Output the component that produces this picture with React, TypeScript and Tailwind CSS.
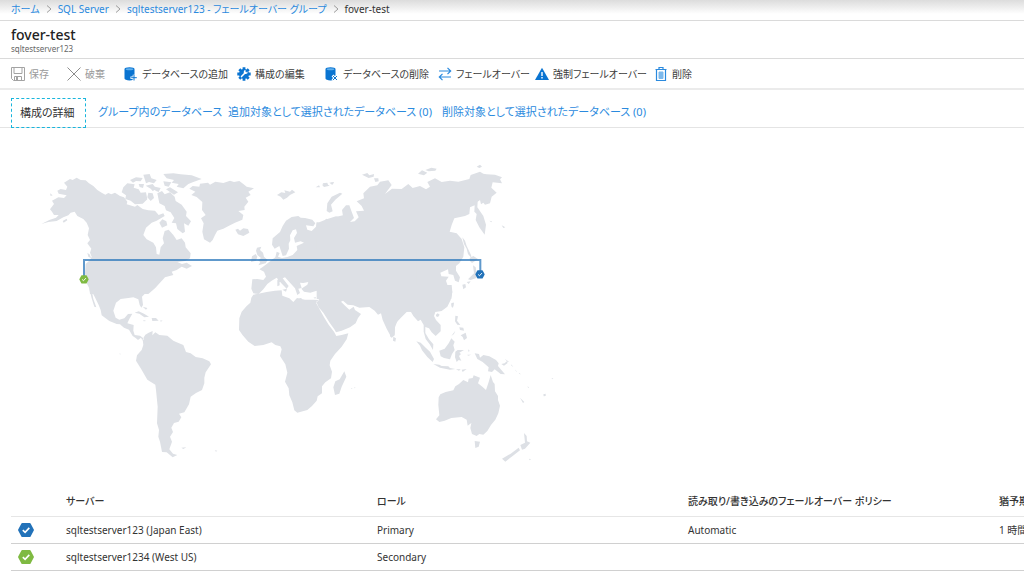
import type { ReactNode } from 'react';
import clsx from 'clsx';

// ── Icons ────────────────────────────────────────────────────

function SaveIcon() {
  return (
    <svg viewBox="0 0 14 14" className="size-3.5 shrink-0" fill="none" stroke="#a3a3a3">
      <path d="M.5.5h13v13h-11l-2-2z" />
      <path d="M3 .5v6h8v-6M3.500 13.500v-4h7v4" />
      <path d="M5 10h2v3H5z" fill="#a3a3a3" stroke="none" />
    </svg>
  );
}

function DiscardIcon() {
  return (
    <svg viewBox="0 0 14 14" className="size-3.5 shrink-0" fill="none" stroke="#8c8c8c">
      <path d="M.5.5l13 13M13.500.5l-13 13" />
    </svg>
  );
}

function DatabaseIcon({ children }: { children: ReactNode }) {
  return (
    <svg viewBox="0 0 14 14" className="size-3.5 shrink-0">
      <path d="M.5 2C.5 1 2.500.3 5.500.3S10.500 1 10.500 2v9.500c0 1-2 1.900-5 1.900s-5-.9-5-1.900z" fill="#0a74d1" />
      <ellipse cx="5.500" cy="2.200" rx="3.800" ry="1" fill="#5fb0ee" />
      {children}
    </svg>
  );
}

function AddDatabaseIcon() {
  return (
    <DatabaseIcon>
      <path d="M10 7.700v6.300M6.500 10.700h7" stroke="#fff" strokeWidth="2.600" />
      <path d="M10 8v5.500M7.200 10.700h5.600" stroke="#0a74d1" />
    </DatabaseIcon>
  );
}

function RemoveDatabaseIcon() {
  return (
    <DatabaseIcon>
      <path d="M7.500 8.500l5 5M12.500 8.500l-5 5" stroke="#fff" strokeWidth="2.600" />
      <path d="M8 9l4 4M12 9l-4 4" stroke="#0a74d1" />
    </DatabaseIcon>
  );
}

function ConfigIcon() {
  return (
    <svg viewBox="0 0 14 14" className="size-3.5 shrink-0">
      <g stroke="#0a74d1" strokeWidth="2.800">
        <path d="M7 .3v13.400M.3 7h13.400M2.300 2.300l9.400 9.400M11.700 2.300l-9.400 9.400" />
      </g>
      <circle cx="7" cy="7" r="5" fill="#0a74d1" />
      <path d="M4.500 9.600l4.200-4.300" stroke="#fff" strokeWidth="1.500" strokeLinecap="round" />
      <path d="M10.600 4.500a2 2 0 1 1-1.900-1.500L8.200 4.400l1.100 1z" fill="#fff" />
    </svg>
  );
}

function FailoverIcon() {
  return (
    <svg viewBox="0 0 14 14" className="size-3.5 shrink-0" fill="none" stroke="#2b8ade" strokeWidth="1.200">
      <path d="M1 4h11.500M9.500.8L12.700 4 9.500 7.200M13 10H1.500M4.500 6.800L1.300 10l3.200 3.200" />
    </svg>
  );
}

function WarningIcon() {
  return (
    <svg viewBox="0 0 14 14" className="size-3.5 shrink-0">
      <path d="M7 .8L14 13H0z" fill="#0a74d1" />
      <path d="M7 5v4M7 10v1.500" stroke="#fff" strokeWidth="1.400" />
    </svg>
  );
}

function DeleteIcon() {
  return (
    <svg viewBox="0 0 14 14" className="size-3.5 shrink-0" fill="none" stroke="#2b8ade">
      <path d="M1.500 2.500h11M5 2.500v-2h4v2M2.500 2.500v11h9v-11" strokeWidth="1.200" />
      <path d="M5 5h4v6.500H5z" fill="#7db9ec" stroke="#7db9ec" />
    </svg>
  );
}

const HEXAGON = 'M4.300 1h7.400a1 1 0 0 1 .9.5l3.200 6a1 1 0 0 1 0 1l-3.200 6a1 1 0 0 1-.9.5H4.300a1 1 0 0 1-.9-.5L.2 8.500a1 1 0 0 1 0-1l3.200-6a1 1 0 0 1 .9-.5z';

function StatusMark({ color }: { color: string }) {
  return (
    <>
      <path d={HEXAGON} fill={color} />
      <path d="M4.800 8.200l2.300 2.200 4.200-4.500" fill="none" stroke="#fff" strokeWidth="1.600" />
    </>
  );
}

// ── Data ─────────────────────────────────────────────────────

const BLUE = '#2272b9';
const GREEN = '#7fba42';

const crumbs = ['ホーム', 'SQL Server', 'sqltestserver123 - フェールオーバー グループ'];

const commands = [
  { label: '保存', icon: <SaveIcon />, disabled: true },
  { label: '破棄', icon: <DiscardIcon />, disabled: true },
  { label: 'データベースの追加', icon: <AddDatabaseIcon /> },
  { label: '構成の編集', icon: <ConfigIcon /> },
  { label: 'データベースの削除', icon: <RemoveDatabaseIcon /> },
  { label: 'フェールオーバー', icon: <FailoverIcon /> },
  { label: '強制フェールオーバー', icon: <WarningIcon /> },
  { label: '削除', icon: <DeleteIcon /> },
];

const tabs = [
  '構成の詳細',
  'グループ内のデータベース',
  '追加対象として選択されたデータベース (0)',
  '削除対象として選択されたデータベース (0)',
];

const servers = [
  { name: 'sqltestserver123 (Japan East)', role: 'Primary', policy: 'Automatic', grace: '1 時間', color: BLUE },
  { name: 'sqltestserver1234 (West US)', role: 'Secondary', policy: '', grace: '', color: GREEN },
];

// Land outlines, one entry per map tile
const land = [
  {
    // North America
    offset: 'translate(120 480)',
    d: `M30 148L42 132 36 122 55 112 72 114 80 106 56 101 52 92 62 87 78 90 82 80 72 68 90 57 98 60 110 53 122 60 137 61 147 70 160 78 172 90 185 98 196 104 205 99 214 103 225 98 240 108 252 112 262 125 260 133 285 140 292 135 308 147 325 151 345 152 356 165 370 160 374 168 350 182 335 188 318 203 310 225 320 238 340 248 348 262 350 282 358 284 362 262 372 250 368 235 374 213 386 209 400 225 410 240 425 235 435 248 437 262 452 280 450 295 435 303 412 306 426 312 440 308 456 318 440 326 425 320 410 330 395 335 400 345 375 352 360 368 345 385 325 402 150 402 148 385 140 370 135 340 137 312 150 300 155 290 150 278 154 266 142 250 150 240 143 225 147 205 140 188 130 177 112 168 104 155 92 158 85 166 70 172 50 183 25 186 4 192 28 180 48 173 56 165 42 165 36 155Z
        M245 97L250 82 262 70 284 73 281 83 296 88 302 98 318 97 322 118 308 131 285 133 272 122 256 117 258 106Z
        M270 60L288 52 308 54 302 64 288 63 279 68Z M310 44L329 42 334 55 350 60 342 70 327 66 318 70Z
        M317 77L338 72 350 87 338 93 332 86Z M370 64L394 67 386 80 374 77Z M296 72L312 72 309 84 299 81Z
        M325 98L338 100 342 114 332 123 322 112Z M345 80L362 84 356 96 346 92Z
        M370 42L400 40 422 43 455 46 485 57 460 66 445 72 430 85 410 80 416 72 395 68 402 60 380 55Z
        M352 100L366 93 374 103 390 97 404 110 407 123 425 134 440 155 438 168 453 184 445 197 432 190 435 215 428 220 412 207 408 190 395 188 403 174 392 157 378 151 374 138 358 130Z
        M358 188L367 178 379 184 382 196 366 203Z M378 88L390 82 414 97 402 104Z M68 183L80 176 82 181 71 188Z M30 100L38 106 32 108Z
        M142 278L150 284 153 295 145 290Z M308 440L322 444 318 449Z`,
  },
  {
    // Greenland, Iceland, British Isles, Europe
    offset: 'translate(540 480)',
    d: `M28 86L38 78 58 80 60 71 84 68 90 74 106 65 130 69 150 62 162 66 178 63 190 72 200 80 222 85 205 95 212 105 197 113 205 125 193 140 194 150 175 153 190 165 187 179 165 188 150 196 130 206 112 212 105 225 98 240 90 248 72 238 67 215 71 190 63 175 77 165 66 150 67 126 50 111 34 105 46 95Z
        M166 209L174 206 180 212 190 205 204 207 208 218 190 228 174 223Z
        M231 263L244 260 240 270 249 278 252 290 263 300 257 310 235 316 241 306 234 301 243 294 232 285 228 272Z M216 289L227 282 232 290 228 302 213 306Z
        M291 105L304 97 316 99 313 91 330 95 336 89 346 97 330 105 321 113 310 119 302 110Z
        M407 82L417 76 420 82Z M426 74L439 71 449 77 432 81Z M452 68L462 67 458 74Z
        M278 235L300 216 308 198 318 182 335 171 355 168 362 173 375 174 397 179 406 190 400 199 378 196 382 209 395 213 408 200 410 186 430 192 438 176 452 180 470 170 492 165 492 418 414 418 418 391 405 394 391 398 372 395 364 386 382 374 385 366 370 369 360 368 365 384 355 386 360 399 352 405 345 385 330 368 315 352 308 355 326 378 320 386 304 370 290 353 275 362 262 372 250 388 236 402 220 400 214 386 217 358 232 357 250 360 258 350 252 335 238 328 248 321 260 312 275 300 286 292 290 275 299 279 294 290 306 294 322 291 338 285 352 270 350 258 372 248 362 244 345 248 342 234 351 219 348 208 338 211 330 226 331 241 326 251 327 266 318 286 308 288 302 270 298 258 284 266 276 254Z
        M292 360L298 354 299 376 292 379Z M307 389L321 386 318 395Z M354 415L365 414 364 418Z M400 413L408 411 406 416Z`,
  },
  {
    // Siberia, East Asia, Japan
    offset: 'translate(960 480)',
    d: `M-10 190L20 178 48 169 70 175 66 150 78 136 88 136 95 155 102 174 90 186 104 184 116 172 108 154 132 152 125 138 110 124 132 115 130 100 150 80 172 76 180 65 205 61 215 75 195 102 216 86 245 87 265 72 278 84 300 78 318 88 330 80 322 66 345 55 365 66 390 62 415 65 448 57 452 45 480 35 490 41 500 43 525 44 546 52 540 58 546 70 518 67 514 83 530 98 515 110 510 130 495 134 490 128 483 133 480 120 473 125 472 142 490 168 498 194 494 224 478 202 467 180 470 162 463 155 464 136 450 142 448 162 435 168 403 175 395 195 389 215 410 220 425 237 433 262 430 290 418 310 408 318 408 332 420 352 416 367 405 362 400 345 386 342 384 328 361 338 364 349 386 350 378 362 383 377 397 395 394 417 -10 417Z
        M20 153L22 130 35 110 60 98 67 101 46 119 33 134 38 154 28 158Z M8 70L22 68 24 75 12 78Z M28 68L42 66 36 74Z
        M126 44L142 39 148 46 162 42 161 50 146 54Z M162 55L175 55 176 64 166 66Z M294 41L306 31 322 38 312 46Z M316 30L334 23 350 26 346 32 326 34Z M470 20L480 14 486 20 478 24Z
        M427 232L435 242 440 258 453 285 455 295 444 282 440 266 432 252Z M449 294L460 288 474 297 456 309 450 303Z
        M459 316L467 322 471 344 469 354 452 360 444 358 462 340Z M427 374L436 372 438 382 430 388Z M440 366L452 364 446 372Z M394 430L402 428 399 443 395 440Z
        M508 182L516 184 514 187Z M545 196L556 202 550 204Z`,
  },
  {
    // Central America and South America
    offset: 'translate(210 870)',
    d: `M57 -10L60 5 65 25 73 50 79 52 70 27 66 5 74 20 86 45 92 60 95 76 118 93 140 102 150 103 162 113 177 119 188 138 197 144 204 150 213 143 218 152 222 146 210 137 194 135 190 122 191 105 172 100 178 87 187 71 174 72 163 85 148 89 137 83 130 62 138 38 152 27 175 24 190 22 205 28 209 45 214 53 219 45 216 20 226 10 248 -10Z
        M218 148L226 134 236 128 248 123 247 136 256 127 268 135 292 137 310 152 320 157 340 165 348 186 362 190 377 201 398 205 418 214 423 223 407 247 403 263 403 280 396 300 378 309 362 320 357 343 343 367 327 371 334 382 326 395 312 399 304 413 309 426 300 440 306 455 298 478 309 491 322 495 308 502 290 487 276 486 270 455 265 440 267 420 261 400 263 350 258 300 256 284 232 269 213 236 198 212 201 196 215 180 220 165Z
        M194 68L206 64 222 71 237 80 223 82 208 71Z M245 84L258 84 266 92 247 93Z M220 90L229 93 221 94Z M271 91L278 92 272 95Z M334 473L349 472 340 477Z M434 481L442 482 438 485Z M149 190L153 193 149 193Z`,
  },
  {
    // Africa, Arabia, India
    offset: 'translate(690 810)',
    d: `M70 74L85 71 110 66 135 62 155 61 157 77 178 85 190 96 201 84 225 89 250 89 268 90 258 98 270 120 283 143 296 164 312 185 319 198 335 195 355 190 350 208 335 230 315 252 301 272 299 286 306 305 303 325 286 337 276 349 276 370 263 379 260 392 246 408 232 420 202 428 193 421 187 397 178 376 176 355 165 335 172 308 166 283 150 258 155 238 151 229 136 225 125 217 100 225 74 228 55 215 38 196 27 180 28 145 35 125 50 108 61 98 64 83Z
        M270 50L267 90 259 95 266 112 280 128 300 160 313 178 318 187 335 182 360 172 377 160 384 144 393 132 375 120 371 110 358 119 346 108 333 95 339 92 353 104 370 106 388 113 418 111 434 122 444 134 453 130 458 150 470 176 485 204 494 194 495 162 515 141 530 126 560 122 560 -60 300 -60Z
        M490 200L498 205 496 215 489 212Z M343 304L349 320 335 350 328 371 315 375 310 352 316 334 329 328Z M364 354L368 356 364 357Z M373 352L377 353 373 355Z`,
  },
  {
    // South-East Asia and Oceania
    offset: 'translate(1170 870)',
    d: `M0 140L13 138 15 112 25 86 48 64 63 66 70 78 84 94 92 89 101 105 101 125 107 147 119 163 129 180 130 163 117 148 106 129 106 111 117 115 125 127 137 138 152 124 152 105 138 90 132 78 136 66 155 63 172 50 182 30 187 5 185 -15 0 -15Z
        M138 74L143 70 149 74 144 81 138 79Z M184 41L190 37 190 48 186 53Z
        M79 154L92 158 108 174 120 185 132 207 128 216 112 201 96 181 90 167Z M130 222L148 224 155 228 175 229 180 234 196 237 180 239 150 233Z M198 238L212 238 207 242Z M215 239L230 237 218 246Z
        M148 182L164 176 176 160 184 145 194 155 190 166 194 180 186 192 180 208 162 204 152 199Z
        M196 185L203 180 222 180 208 188 213 192 207 198 214 212 206 210 200 216 195 202Z
        M196 77L204 79 201 92 211 105 202 104 195 94Z M208 112L220 113 222 122 210 120Z M212 136L227 128 231 144 222 151 218 141Z M184 138L196 122 192 132Z M234 178L239 182 236 186Z M232 194L244 194 234 197Z
        M254 190L267 192 270 203 280 195 298 199 318 210 326 220 324 228 345 253 332 252 314 238 306 246 294 244 296 232 278 216 262 207Z
        M334 222L344 220 350 214 353 219 342 227Z M344 206L357 215 353 216Z M362 222L370 230 365 228Z M374 238L382 246 378 244Z M386 248L393 253 388 252Z
        M146 322L151 313 167 306 190 301 196 289 207 282 220 270 234 277 236 266 248 264 251 256 270 263 264 280 278 291 288 300 296 276 302 255 309 276 314 282 315 304 324 318 324 330 330 347 325 370 316 389 303 405 292 423 280 434 268 432 260 438 246 432 241 414 244 399 233 407 230 389 215 381 184 384 164 392 148 396 138 388 148 376 145 345Z
        M254 453L270 455 266 470 256 474Z M402 429L410 438 411 454 421 458 405 476 396 479 391 465 405 458Z M386 473L390 481 368 498 346 515 336 506 362 491Z
        M390 323L403 336 399 339Z M460 313L467 311 467 318 461 319Z M413 288L417 293 414 294Z M484 265L490 265 488 268Z M417 506L423 508 419 511Z`,
  },
];

// ── Page parts ───────────────────────────────────────────────

function Breadcrumb() {
  return (
    <nav aria-label="breadcrumb" className="h-[21px] border-b border-[#dadada] bg-linear-to-b from-[#dcdcdc] to-white to-70% px-[11px]">
      <ol className="flex h-[18px] items-center">
        {crumbs.map((crumb) => (
          <li key={crumb} className="flex items-center">
            <a href="#" className="text-[#2b8ade] hover:underline">{crumb}</a>
            <svg viewBox="0 0 6 8" className="mx-1.5 h-2 w-1.5" fill="none" stroke="#9b9b9b">
              <path d="M1 .5L5 4 1 7.500" />
            </svg>
          </li>
        ))}
        <li aria-current="page">fover-test</li>
      </ol>
    </nav>
  );
}

function CommandBar() {
  return (
    <div role="toolbar" className="grid h-[31px] grid-cols-[56px_57px_113px_88px_113px_97px_119px_1fr] items-center border-b-2 border-[#ebebeb] px-[11px]">
      {commands.map(({ label, icon, disabled }) => (
        <button
          key={label}
          type="button"
          disabled={disabled}
          className="flex items-center gap-1 text-[#3c3c3c] disabled:text-[#9a9a9a]"
        >
          {icon}
          {label}
        </button>
      ))}
    </div>
  );
}

function Tabs() {
  return (
    <div role="tablist" className="grid h-[38px] grid-cols-[75px_130px_214px_1fr] items-end border-b border-[#e4e4e4] px-[11px] text-[11px]">
      {tabs.map((tab, i) => (
        <button
          key={tab}
          type="button"
          role="tab"
          aria-selected={i === 0}
          className={clsx(
            '-mb-px text-left',
            i === 0 ? 'h-[30px] border border-dashed border-[#19b5dc] px-2' : 'h-8 px-3 text-[#2b8ade]',
          )}
        >
          {tab}
        </button>
      ))}
    </div>
  );
}

function ReplicationMap() {
  return (
    <svg viewBox="0 384 1680 1074" className="w-[560px] max-w-full" role="img" aria-label="sqltestserver123">
      <g fill="#dde0e5">
        {land.map(({ offset, d }) => (
          <path key={offset} transform={offset} d={d} />
        ))}
      </g>
      <path d="M252 830V780H1441V820" fill="none" stroke="#2272b9" strokeOpacity=".72" strokeWidth="6" />
      <g transform="translate(238 824) scale(1.750)">
        <StatusMark color={GREEN} />
      </g>
      <g transform="translate(1426 809) scale(1.750)">
        <StatusMark color={BLUE} />
      </g>
    </svg>
  );
}

function ServerTable() {
  return (
    <div className="overflow-hidden pl-[11px]">
      <table className="w-[1299px] table-fixed border-collapse text-left">
        <colgroup>
          <col className="w-[55px]" />
          <col />
          <col />
          <col />
          <col />
        </colgroup>
        <thead>
          <tr className="h-[30px] border-b border-[#e6e6e6]">
            <th aria-label="状態" />
            <th className="font-medium">サーバー</th>
            <th className="font-medium">ロール</th>
            <th className="font-medium">読み取り/書き込みのフェールオーバー ポリシー</th>
            <th className="font-medium">猶予期間 (分)</th>
          </tr>
        </thead>
        <tbody>
          {servers.map(({ name, role, policy, grace, color }) => (
            <tr key={name} className="h-[27px] border-b border-[#d0d0d0]">
              <td className="pl-[7px]">
                <svg viewBox="0 0 16 16" className="size-4">
                  <StatusMark color={color} />
                </svg>
              </td>
              <td>{name}</td>
              <td>{role}</td>
              <td>{policy}</td>
              <td>{grace}</td>
            </tr>
          ))}
        </tbody>
      </table>
    </div>
  );
}

export default function App() {
  return (
    <main className="min-h-screen overflow-hidden bg-white font-['Noto_Sans','Noto_Sans_CJK_JP',sans-serif] text-[10px] leading-4 whitespace-nowrap text-[#333] [font-feature-settings:'palt']">
      <Breadcrumb />
      <header className="h-[38px] border-b border-[#dadada] px-[11px] pt-1">
        <h1 className="text-sm leading-5 font-medium text-[#222]">fover-test</h1>
        <p className="text-[8px] leading-2 text-[#666]">sqltestserver123</p>
      </header>
      <CommandBar />
      <Tabs />
      <ReplicationMap />
      <ServerTable />
    </main>
  );
}
